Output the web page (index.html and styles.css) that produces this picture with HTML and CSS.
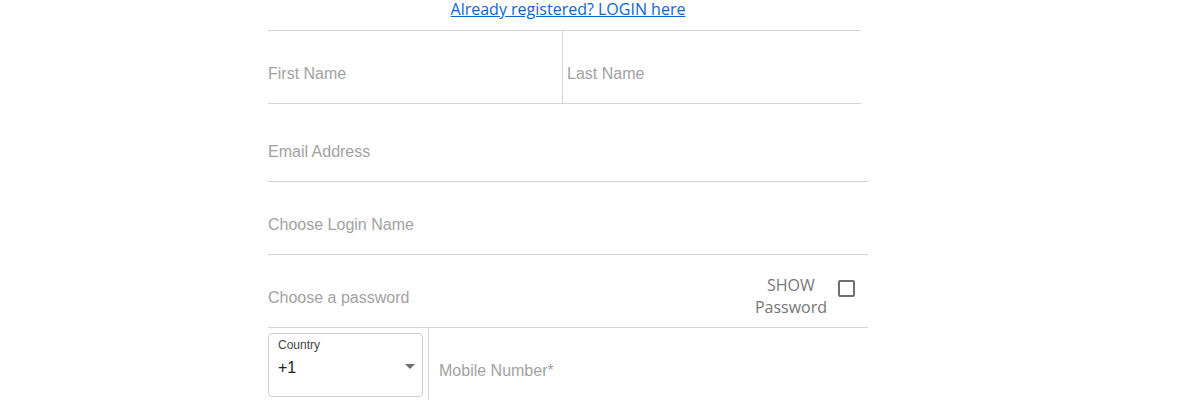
FILE: index.html
```html
<!DOCTYPE html>
<html lang="en">
<head>
<meta charset="utf-8">
<title>Register</title>
<link rel="stylesheet" href="styles.css">
</head>
<body>
<div class="form">
  <div class="login-link"><a href="#">Already registered? LOGIN here</a></div>

  <div class="name-row">
    <div class="name-cell first"><input class="text-input" type="text" placeholder="First Name"></div>
    <div class="name-cell last"><input class="text-input" type="text" placeholder="Last Name"></div>
  </div>

  <div class="field email"><input class="text-input" type="email" placeholder="Email Address"></div>
  <div class="field"><input class="text-input" type="text" placeholder="Choose Login Name"></div>
  <div class="field">
    <input class="text-input" type="password" placeholder="Choose a password">
    <div class="show-group">
      <span class="show-label">SHOW<br>Password</span>
      <input class="checkbox" type="checkbox" aria-label="Show password">
    </div>
  </div>

  <div class="phone-row">
    <div class="country">
      <div class="country-label">Country</div>
      <div class="country-value">
        <span>+1</span>
        <svg class="caret" width="10" height="5" viewBox="0 0 10 5"><path d="M0 0H10L5 5Z" fill="#6f6f6f"/></svg>
      </div>
    </div>
    <div class="mobile"><input class="text-input" type="tel" placeholder="Mobile Number*"></div>
  </div>
</div>
</body>
</html>
```

FILE: styles.css
```css
html, body {
  margin: 0;
  padding: 0;
  background: #ffffff;
}

body {
  font-family: "Liberation Sans", Arial, sans-serif;
}

.form {
  width: 600px;
  margin-left: 268px;
}

.login-link {
  text-align: center;
  font-family: "Open Sans", sans-serif;
  font-size: 16px;
  line-height: 18px;
  margin-bottom: 12px;
}

.login-link a {
  color: #0b66d6;
  text-decoration: underline;
}

.text-input {
  border: none;
  outline: none;
  padding: 2px 0 0 0;
  margin: 0;
  height: 22px;
  box-sizing: border-box;
  width: 100%;
  font-family: "Liberation Sans", Arial, sans-serif;
  font-size: 16px;
  color: #333;
  background: transparent;
}

.text-input::placeholder {
  color: #a2a2a2;
  opacity: 1;
}

.name-row {
  width: 593px;
  height: 74px;
  box-sizing: border-box;
  border-top: 1px solid #d4d4d4;
  border-bottom: 1px solid #d4d4d4;
  display: flex;
}

.name-cell {
  display: flex;
  align-items: center;
  padding-top: 12px;
  box-sizing: border-box;
}

.name-cell.first {
  width: 295px;
  border-right: 1px solid #d4d4d4;
}

.name-cell.last {
  flex: 1;
  padding-left: 4px;
}

.field {
  height: 73px;
  padding-top: 12px;
  box-sizing: border-box;
  border-bottom: 1px solid #d4d4d4;
  display: flex;
  align-items: center;
}

.field.email {
  height: 78px;
  padding-top: 17px;
}

.show-group {
  display: flex;
  align-items: flex-start;
  flex-shrink: 0;
  margin-right: 13px;
  margin-bottom: 2px;
}

.show-label {
  font-family: "Open Sans", sans-serif;
  font-size: 16px;
  line-height: 22px;
  color: #777777;
  text-align: center;
  white-space: nowrap;
}

.checkbox {
  appearance: none;
  -webkit-appearance: none;
  width: 17px;
  height: 17px;
  margin: 6px 0 0 11px;
  box-sizing: border-box;
  border: 2px solid #6f6f6f;
  border-radius: 2px;
  background: #fff;
}

.phone-row {
  display: flex;
  height: 80px;
}

.country {
  width: 155px;
  height: 64px;
  margin-top: 5px;
  box-sizing: border-box;
  border: 1px solid #cfcfcf;
  border-radius: 4px;
  padding: 4px 7px 0 9px;
  flex-shrink: 0;
}

.country-label {
  font-size: 12px;
  line-height: 14px;
  color: #444444;
}

.country-value {
  display: flex;
  justify-content: space-between;
  align-items: center;
  margin-top: 6px;
  font-size: 16px;
  line-height: 20px;
  color: #222222;
}

.caret {
  display: block;
  margin-top: -4px;
}

.mobile {
  flex: 1;
  margin-left: 5px;
  border-left: 1px solid #d4d4d4;
  padding-left: 10px;
  height: 72px;
  padding-top: 12px;
  box-sizing: border-box;
  display: flex;
  align-items: center;
}
```
